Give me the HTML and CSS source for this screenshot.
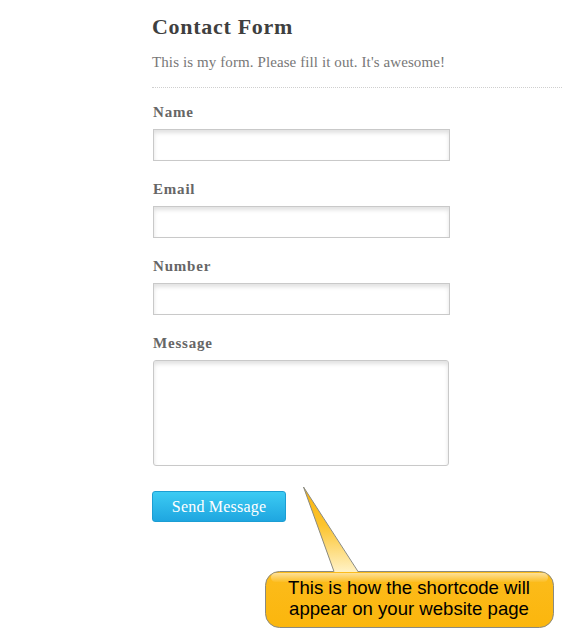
FILE: index.html
```html
<!DOCTYPE html>
<html>
<head>
<meta charset="utf-8">
<title>Contact Form</title>
<link rel="stylesheet" href="styles.css">
</head>
<body>
<div class="page">
  <div class="form-head">
    <h1 class="title">Contact Form</h1>
    <p class="intro">This is my form. Please fill it out. It's awesome!</p>
  </div>
  <form class="form">
    <div class="field">
      <label class="label">Name</label>
      <input class="input" type="text">
    </div>
    <div class="field">
      <label class="label">Email</label>
      <input class="input" type="text">
    </div>
    <div class="field">
      <label class="label">Number</label>
      <input class="input" type="text">
    </div>
    <div class="field">
      <label class="label">Message</label>
      <textarea class="textarea"></textarea>
    </div>
    <button class="send" type="button">Send Message</button>
  </form>
</div>
<div class="callout">
  <svg class="callout-shape" width="300" height="155" viewBox="0 0 300 155">
    <defs>
      <linearGradient id="tailg" x1="0" y1="0" x2="0" y2="1">
        <stop offset="0" stop-color="#fbb40c"/>
        <stop offset="0.45" stop-color="#fcc42e"/>
        <stop offset="1" stop-color="#fff2c6"/>
      </linearGradient>
      <linearGradient id="bubg" x1="0" y1="0" x2="0" y2="1">
        <stop offset="0" stop-color="#fcbc1c"/>
        <stop offset="1" stop-color="#fbb60d"/>
      </linearGradient>
      <linearGradient id="gloss" x1="0" y1="0" x2="0" y2="1">
        <stop offset="0" stop-color="#ffffff" stop-opacity="0.55"/>
        <stop offset="1" stop-color="#ffffff" stop-opacity="0.05"/>
      </linearGradient>
    </defs>
    <rect x="5.5" y="91.5" width="288" height="56" rx="14" ry="14" fill="url(#bubg)" stroke="#8a8a80" stroke-width="1"/>
    <rect x="11" y="93" width="277" height="9" rx="4.5" ry="4.5" fill="url(#gloss)"/>
    <polygon points="43.5,7 74,92 98,92" fill="url(#tailg)"/>
    <polyline points="74,91.5 43.5,7 98,91.5" fill="none" stroke="#8a8a80" stroke-width="1"/>
  </svg>
  <p class="callout-text">This is how the shortcode will<br>appear on your website page</p>
</div>
</body>
</html>
```

FILE: styles.css
```css
html, body {
  margin: 0;
  padding: 0;
  background: #ffffff;
}

body {
  font-family: "Liberation Serif", "DejaVu Serif", serif;
  position: relative;
  width: 562px;
  height: 643px;
  overflow: hidden;
}

.page {
  padding-left: 152px;
  padding-top: 14px;
}

.form-head {
  border-bottom: 1px dotted #cfcfcf;
  padding-bottom: 15px;
}

.title {
  margin: 0;
  font-size: 22px;
  line-height: 26px;
  font-weight: bold;
  letter-spacing: 0.7px;
  color: #3f3f3f;
}

.intro {
  margin: 12px 0 0;
  font-size: 15px;
  line-height: 20px;
  letter-spacing: 0.1px;
  color: #777777;
}

.form {
  display: flex;
  flex-direction: column;
  align-items: flex-start;
  padding-top: 14px;
}

.field {
  display: flex;
  flex-direction: column;
  align-items: flex-start;
  gap: 7px;
  margin-bottom: 18px;
}

.label {
  margin-left: 1px;
  font-size: 15px;
  line-height: 20px;
  font-weight: bold;
  letter-spacing: 0.8px;
  color: #666666;
}

.input, .textarea {
  box-sizing: border-box;
  margin: 0 0 0 1px;
  padding: 0;
  background: #ffffff;
  border: 1px solid #c9c9c9;
  box-shadow: inset 0 3px 4px rgba(0, 0, 0, 0.12);
  outline: none;
  font-family: inherit;
}

.input {
  width: 297px;
  height: 32px;
  border-radius: 0;
}

.textarea {
  width: 296px;
  height: 106px;
  border-radius: 3px;
  resize: none;
}

.send {
  margin-top: 7px;
  box-sizing: border-box;
  width: 134px;
  height: 31px;
  padding: 0;
  border: 1px solid #1c9ed3;
  border-radius: 3px;
  background: linear-gradient(#3ccbf3, #1fa6e0);
  color: #ffffff;
  font-family: "Liberation Serif", "DejaVu Serif", serif;
  font-size: 16px;
  line-height: 29px;
  letter-spacing: 0.2px;
}

.callout {
  position: absolute;
  left: 260px;
  top: 480px;
  width: 300px;
  height: 155px;
}

.callout-shape {
  display: block;
}

.callout-text {
  position: absolute;
  left: 5px;
  top: 97px;
  width: 288px;
  margin: 0;
  text-align: center;
  font-family: "Liberation Sans", Arial, sans-serif;
  font-size: 18.6px;
  line-height: 21px;
  color: #000000;
}
```
